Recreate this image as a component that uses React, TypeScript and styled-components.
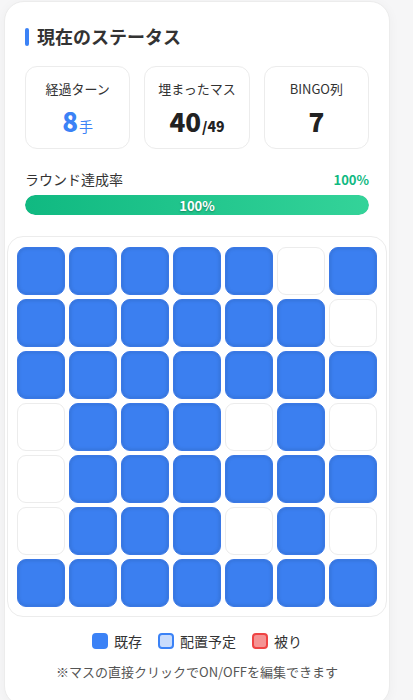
import styled, { createGlobalStyle } from "styled-components";

const GlobalStyle = createGlobalStyle`
  body {
    margin: 0;
    background: #f6f6f7;
    font-family: "Noto Sans CJK JP", "Noto Sans", sans-serif;
    color: #333;
  }
`;

const Card = styled.div`
  box-sizing: border-box;
  width: 386px;
  margin: 1px 0 0 4px;
  padding: 20px 20px 24px 20px;
  background: #fff;
  border: 1px solid #ececec;
  border-radius: 20px;
  box-shadow: 0 2px 12px rgba(0, 0, 0, 0.04);
`;

const Title = styled.h2`
  display: flex;
  align-items: center;
  height: 28px;
  margin: 0 0 16px 0;
  padding-left: 12px;
  position: relative;
  font-size: 18px;
  font-weight: 700;
  color: #333;

  &::before {
    content: "";
    position: absolute;
    left: 0;
    top: 6px;
    width: 4px;
    height: 18px;
    border-radius: 2px;
    background: #3b82f6;
  }
`;

const StatGrid = styled.div`
  display: grid;
  grid-template-columns: repeat(3, 1fr);
  gap: 14px;
`;

const StatBox = styled.div`
  height: 83px;
  box-sizing: border-box;
  border: 1px solid #ececec;
  border-radius: 12px;
  display: flex;
  flex-direction: column;
  align-items: center;
  padding-top: 12px;
`;

const StatLabel = styled.div`
  font-size: 13px;
  line-height: 20px;
  color: #333;
`;

const StatValue = styled.div<{ $accent?: boolean }>`
  margin-top: 8px;
  font-size: 26px;
  line-height: 28px;
  font-weight: 900;
  color: ${(p) => (p.$accent ? "#3b82f6" : "#222")};

  > small {
    font-size: 14px;
    font-weight: ${(p) => (p.$accent ? 400 : 900)};
    margin-left: 1px;
  }
`;

const ProgressHead = styled.div`
  display: flex;
  justify-content: space-between;
  align-items: center;
  height: 20px;
  margin-top: 20px;
  font-size: 14px;

  > .rate {
    font-size: 13px;
    font-weight: 700;
    color: #10b981;
  }
`;

const ProgressTrack = styled.div`
  height: 20px;
  margin-top: 6px;
  border-radius: 10px;
  background: #e5e7eb;
  overflow: hidden;
`;

const ProgressFill = styled.div`
  height: 100%;
  border-radius: 10px;
  background: linear-gradient(90deg, #10b981, #34d399);
  display: flex;
  align-items: center;
  justify-content: center;
  color: #fff;
  font-size: 13px;
  font-weight: 700;
  text-shadow: 0 1px 2px rgba(0, 0, 0, 0.35);
`;

const BoardPanel = styled.div`
  margin: 21px -18px 0 -18px;
  padding: 10px 9px 9px 9px;
  border: 1px solid #ececec;
  border-radius: 16px;
`;

const Board = styled.div`
  display: grid;
  grid-template-columns: repeat(7, 48px);
  gap: 4px;
`;

const Cell = styled.div<{ $on: boolean }>`
  width: 48px;
  height: 48px;
  box-sizing: border-box;
  border-radius: 9px;
  background: ${(p) => (p.$on ? "#3b7ff0" : "#fff")};
  border: 1px solid ${(p) => (p.$on ? "#3a78e6" : "#ececec")};
  box-shadow: ${(p) => (p.$on ? "inset 0 0 4px rgba(0, 0, 0, 0.14)" : "none")};
`;

const Legend = styled.div`
  display: flex;
  justify-content: center;
  align-items: center;
  gap: 16px;
  margin-top: 14px;
  font-size: 14px;
  line-height: 20px;
`;

const LegendItem = styled.div`
  display: flex;
  align-items: center;
  gap: 6px;
`;

const Swatch = styled.span<{ $bg: string; $border: string }>`
  display: inline-block;
  width: 16px;
  height: 16px;
  box-sizing: border-box;
  border-radius: 4px;
  background: ${(p) => p.$bg};
  border: 2px solid ${(p) => p.$border};
`;

const Note = styled.div`
  margin-top: 12px;
  text-align: center;
  font-size: 13px;
  line-height: 18px;
  color: #555;
`;

const board = [
  "1111101",
  "1111110",
  "1111111",
  "0111010",
  "0111111",
  "0111010",
  "1111111",
];

export default function App() {
  return (
    <>
      <GlobalStyle />
      <Card>
        <Title>現在のステータス</Title>
        <StatGrid>
          <StatBox>
            <StatLabel>経過ターン</StatLabel>
            <StatValue $accent>
              8<small>手</small>
            </StatValue>
          </StatBox>
          <StatBox>
            <StatLabel>埋まったマス</StatLabel>
            <StatValue>
              40<small>/49</small>
            </StatValue>
          </StatBox>
          <StatBox>
            <StatLabel>BINGO列</StatLabel>
            <StatValue>7</StatValue>
          </StatBox>
        </StatGrid>
        <ProgressHead>
          <span>ラウンド達成率</span>
          <span className="rate">100%</span>
        </ProgressHead>
        <ProgressTrack>
          <ProgressFill style={{ width: "100%" }}>100%</ProgressFill>
        </ProgressTrack>
        <BoardPanel>
          <Board>
            {board.map((row, r) =>
              row.split("").map((c, i) => <Cell key={`${r}-${i}`} $on={c === "1"} />)
            )}
          </Board>
        </BoardPanel>
        <Legend>
          <LegendItem>
            <Swatch $bg="#3b82f6" $border="#3b82f6" />
            既存
          </LegendItem>
          <LegendItem>
            <Swatch $bg="#c9dcfc" $border="#3b82f6" />
            配置予定
          </LegendItem>
          <LegendItem>
            <Swatch $bg="#f59393" $border="#ef4444" />
            被り
          </LegendItem>
        </Legend>
        <Note>※マスの直接クリックでON/OFFを編集できます</Note>
      </Card>
    </>
  );
}
